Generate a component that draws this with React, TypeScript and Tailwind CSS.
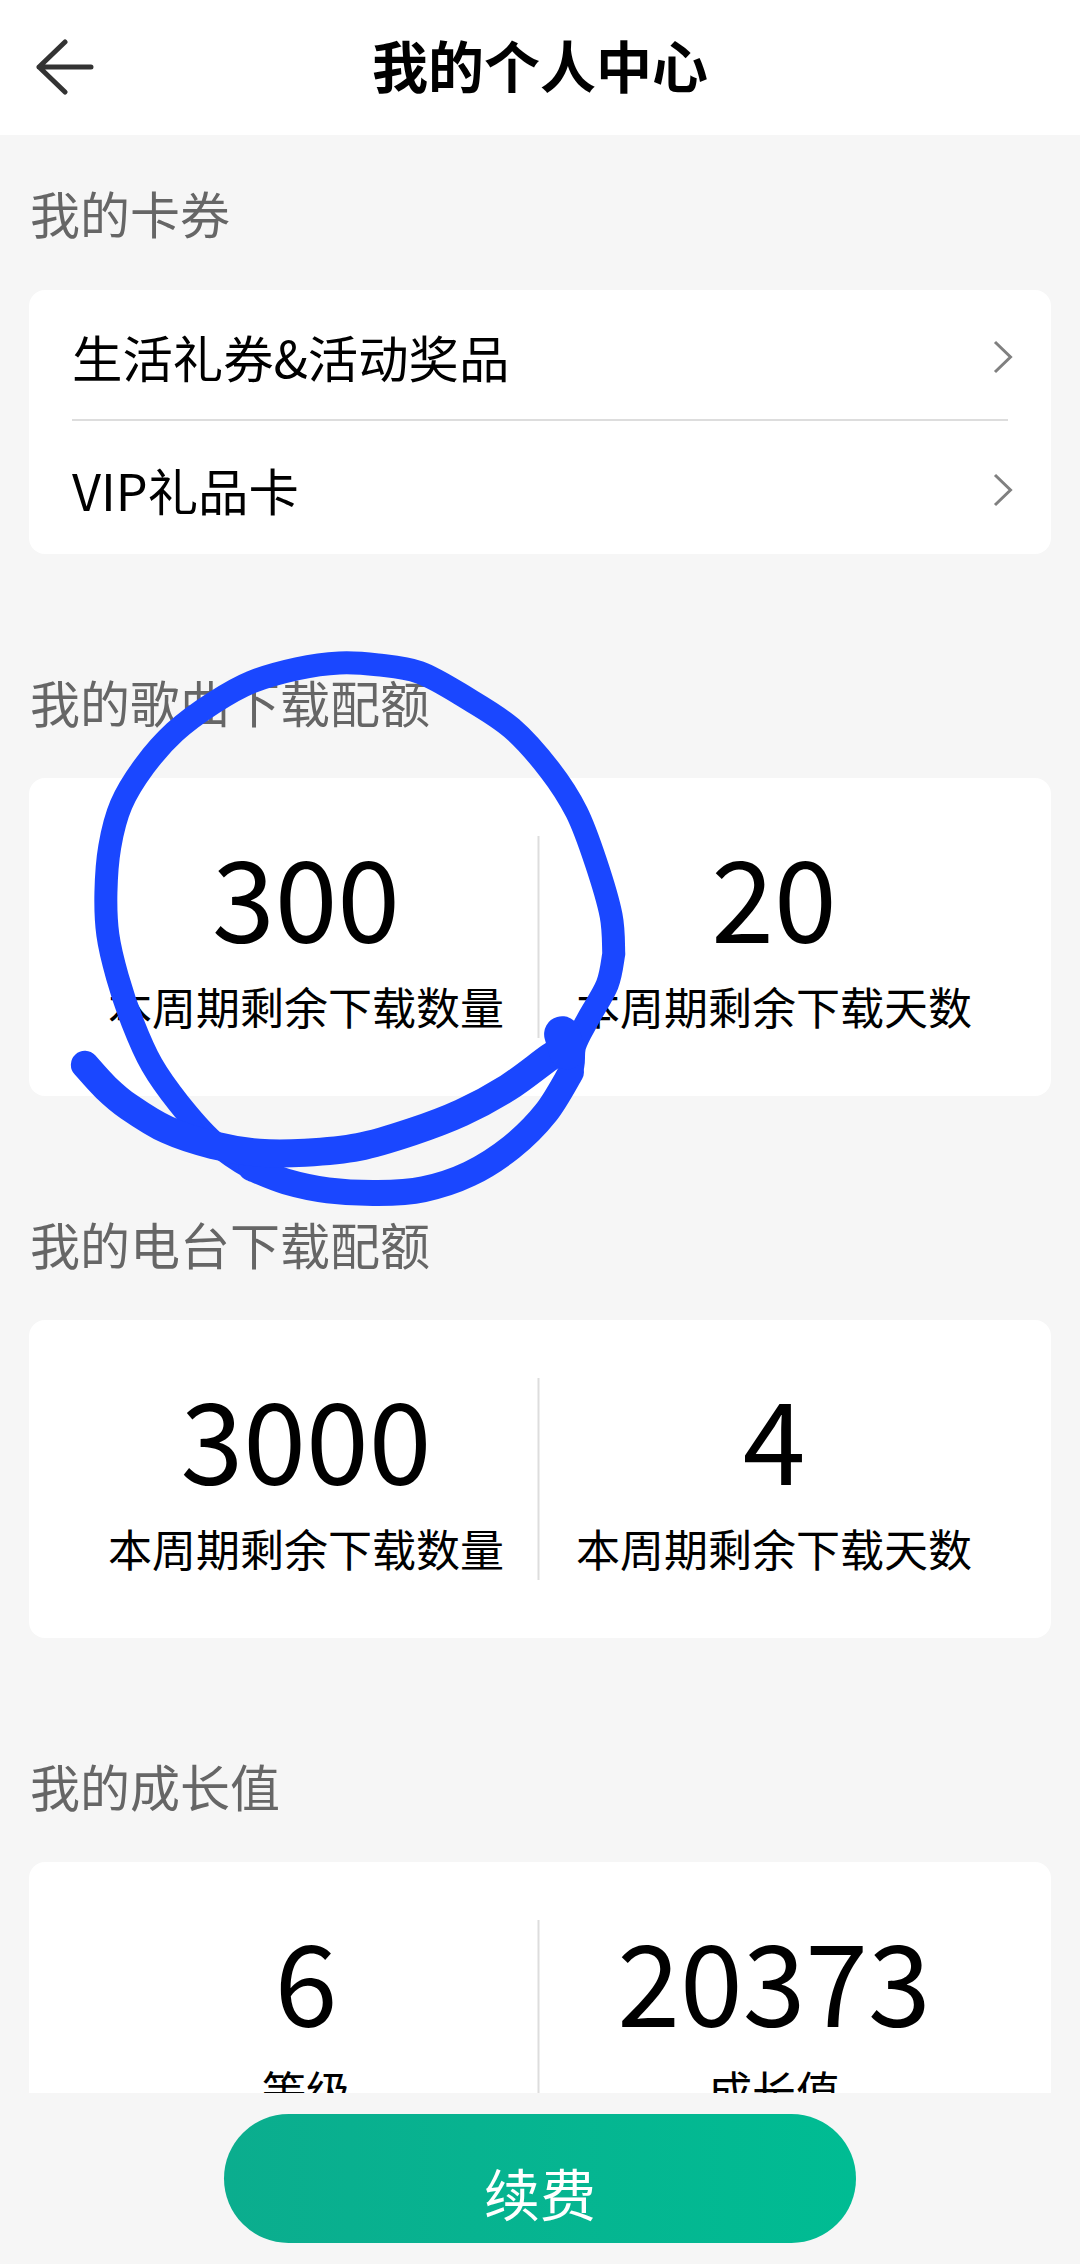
const sections = [
  {
    title: "我的歌曲下载配额",
    stats: [
      { value: "300", label: "本周期剩余下载数量" },
      { value: "20", label: "本周期剩余下载天数" },
    ],
  },
  {
    title: "我的电台下载配额",
    stats: [
      { value: "3000", label: "本周期剩余下载数量" },
      { value: "4", label: "本周期剩余下载天数" },
    ],
  },
  {
    title: "我的成长值",
    stats: [
      { value: "6", label: "等级" },
      { value: "20373", label: "成长值" },
    ],
  },
];

// pen strokes traced off a 2.613x crop of the screenshot at (60, 640)
const toPage = (points: number[][]) =>
  points.map(([x, y]) => [60 + x / 2.613, 640 + y / 2.613]);

const inkLoop = toPage([
  [1447, 820], [1440, 720], [1400, 580], [1350, 450], [1280, 340], [1180, 230], [1060, 150], [940, 85],
  [830, 65], [730, 60], [620, 75], [500, 110], [400, 165], [300, 240], [220, 330], [160, 430], [130, 540],
  [120, 660], [125, 770], [150, 880], [190, 1000], [240, 1110], [310, 1210], [400, 1310], [500, 1380],
  [590, 1415], [700, 1438], [830, 1445], [950, 1435], [1070, 1395], [1180, 1325], [1270, 1235], [1335, 1130],
  [1345, 1060], [1380, 990], [1430, 900], [1447, 820],
]);

const inkLoopBottom = toPage([
  [500, 1380], [590, 1415], [700, 1438], [830, 1445], [950, 1435], [1070, 1395], [1180, 1325], [1270, 1235], [1335, 1130],
]);

const inkTail = toPage([
  [65, 1110], [120, 1170], [180, 1220], [280, 1280], [400, 1320], [520, 1340], [640, 1340], [780, 1325],
  [920, 1285], [1050, 1235], [1170, 1170], [1280, 1090], [1330, 1060],
]);

const inkBlob = toPage([[1312, 1030], [1325, 1075]]);

function smoothPath(points: number[][]) {
  let d = `M${points[0][0]} ${points[0][1]}`;
  for (let i = 0; i < points.length - 1; i++) {
    const p0 = points[i - 1] || points[i];
    const p1 = points[i];
    const p2 = points[i + 1];
    const p3 = points[i + 2] || p2;
    d += ` C${p1[0] + (p2[0] - p0[0]) / 6} ${p1[1] + (p2[1] - p0[1]) / 6} ${p2[0] - (p3[0] - p1[0]) / 6} ${p2[1] - (p3[1] - p1[1]) / 6} ${p2[0]} ${p2[1]}`;
  }
  return d;
}

function Chevron() {
  return (
    <svg width="20" height="34" viewBox="0 0 20 34" fill="none" className="mr-[-5px] shrink-0">
      <path d="M2 2 L17.5 17 L2 32" stroke="#808080" strokeWidth="3" />
    </svg>
  );
}

function SectionLabel({ children }: { children: string }) {
  return (
    <h2 className="h-[78px] pl-[30px] text-[50px] leading-[72px] font-normal text-[#666666]">
      {children}
    </h2>
  );
}

function Stat({ value, label }: { value: string; label: string }) {
  return (
    <div className="flex flex-1 flex-col items-center">
      <div className="h-[124px] text-[113px] leading-[116px] text-black">{value}</div>
      <div className="mt-[16px] text-[44px] leading-[60px] text-black">{label}</div>
    </div>
  );
}

export default function App() {
  return (
    <div className="relative flex h-[2264px] w-[1080px] flex-col overflow-hidden bg-[#f6f6f6] font-['Noto_Sans_CJK_SC',sans-serif]">
      <header className="relative flex h-[135px] shrink-0 items-center justify-center bg-white">
        <svg width="60" height="56" viewBox="0 0 60 56" fill="none" className="absolute top-[39px] left-[36px]">
          <path d="M29 3 L3 28 L29 53 M3 28 H55" stroke="#333333" strokeWidth="5" strokeLinecap="round" strokeLinejoin="round" />
        </svg>
        <h1 className="pb-[8px] text-[56px] leading-none font-bold text-black">我的个人中心</h1>
      </header>

      <main className="min-h-0 flex-1 overflow-hidden">
        <div className="mt-[41px]">
          <SectionLabel>我的卡券</SectionLabel>
        </div>
        <div className="mx-[29px] mt-[36px] h-[264px] rounded-2xl bg-white px-[43px]">
          <div className="flex h-[131px] items-center justify-between border-b-2 border-[#dddddd] pt-[4px] text-[50.4px] text-black">
            <span>生活礼券&活动奖品</span>
            <Chevron />
          </div>
          <div className="flex h-[133px] items-center justify-between pt-[4px] text-[50.4px] text-black">
            <span>VIP礼品卡</span>
            <Chevron />
          </div>
        </div>

        {sections.map((section) => (
          <section key={section.title} className="mt-[111px]">
            <SectionLabel>{section.title}</SectionLabel>
            <div className="mx-[29px] mt-[35px] flex h-[318px] items-start rounded-2xl bg-white px-[44px] pt-[58px]">
              <div className="flex h-[202px] w-full">
                <Stat {...section.stats[0]} />
                <div className="h-full w-[2px] shrink-0 -translate-x-[1.5px] bg-[#dddddd]" />
                <Stat {...section.stats[1]} />
              </div>
            </div>
          </section>
        ))}
      </main>

      <footer className="flex h-[171px] shrink-0 justify-center bg-[#f6f6f6] pt-[21px]">
        <button className="h-[129px] w-[632px] rounded-full bg-gradient-to-r from-[#0bad8e] to-[#00bc93] pt-[26px] text-[56px] text-white">
          续费
        </button>
      </footer>

      <svg width="1080" height="2264" viewBox="0 0 1080 2264" fill="none" className="pointer-events-none absolute inset-0">
        <path d={smoothPath(inkLoop)} stroke="#1a47ff" strokeWidth="23" strokeLinecap="round" strokeLinejoin="round" />
        <path d={smoothPath(inkLoopBottom)} stroke="#1a47ff" strokeWidth="26" strokeLinecap="round" strokeLinejoin="round" />
        <path d={smoothPath(inkTail)} stroke="#1a47ff" strokeWidth="28" strokeLinecap="round" strokeLinejoin="round" />
        <path d={smoothPath(inkBlob)} stroke="#1a47ff" strokeWidth="36" strokeLinecap="round" />
      </svg>
    </div>
  );
}
